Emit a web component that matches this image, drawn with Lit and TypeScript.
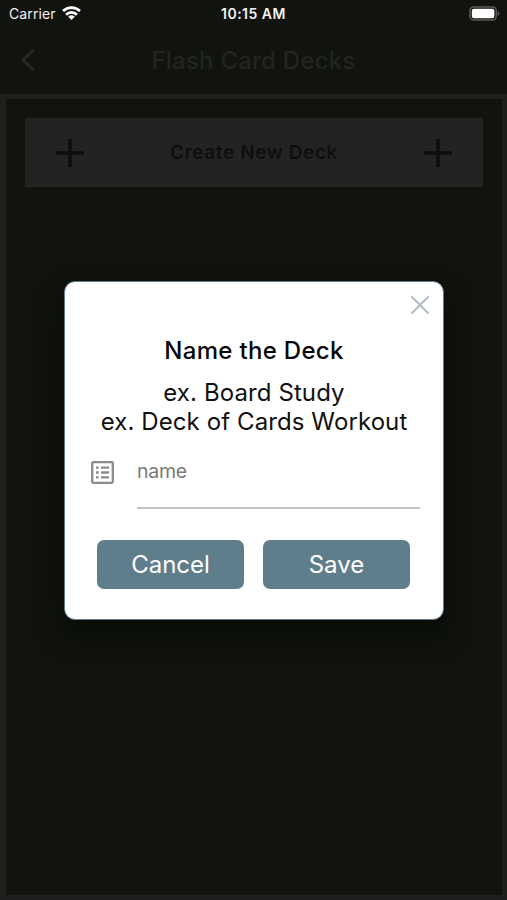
import { LitElement, html, css } from "lit";
import { customElement } from "lit/decorators.js";

const plus = html`<svg class="plus" width="28" height="28" viewBox="0 0 28 28">
  <path d="M14 0v28M0 14h28" stroke="#0e0f0d" stroke-width="3.6" />
</svg>`;

@customElement("status-bar")
class StatusBar extends LitElement {
  static styles = css`
    :host { display: grid; grid-template-columns: 1fr auto 1fr; align-items: center; height: 27px; box-sizing: border-box; padding: 0 7px 0 9px; color: #f2f2f2; }
    .left { display: flex; align-items: center; gap: 6px; font-size: 14px; letter-spacing: 0.1px; }
    .time { margin-left: -2px; font-size: 14px; font-weight: 600; letter-spacing: 0.5px; }
    .right { display: flex; justify-content: flex-end; }
    svg { display: block; }
    .left svg { margin-top: -1px; }
  `;
  render() {
    return html`
      <div class="left">
        <span>Carrier</span>
        <svg width="19" height="14" viewBox="0 0 19 14" fill="none" stroke="#fff" stroke-width="2.7">
          <path d="M1 5.1a12.3 12.3 0 0 1 17 0" />
          <path d="M4.1 8.7a7.6 7.6 0 0 1 10.8 0" />
          <path d="M9.5 14L6.2 10.7a4.6 4.6 0 0 1 6.6 0z" fill="#fff" stroke="none" />
        </svg>
      </div>
      <div class="time">10:15 AM</div>
      <div class="right">
        <svg width="31" height="15" viewBox="0 0 31 15">
          <rect x="0.9" y="0.9" width="26.4" height="13.2" rx="4" fill="none" stroke="#5b5c5a" stroke-width="1.5" />
          <rect x="2.8" y="2.8" width="22.6" height="9.4" rx="2.2" fill="#fff" />
          <path d="M28.7 5.2c2.2.8 2.2 3.8 0 4.6z" fill="#5b5c5a" />
        </svg>
      </div>
    `;
  }
}

@customElement("name-dialog")
class NameDialog extends LitElement {
  static styles = css`
    :host { display: flex; flex-direction: column; box-sizing: border-box; width: 380px; height: 339px; border: 1px solid #607d8b; border-radius: 11px; background: #fff; color: #111; box-shadow: 0 14px 24px 6px rgba(0, 8, 2, 0.5); }
    .top { display: flex; justify-content: flex-end; padding: 13px 13px 0 0; height: 19px; }
    .title { margin-top: 22px; text-align: center; font-size: 24px; line-height: 30px; font-weight: 500; letter-spacing: 0.3px; color: #080808; }
    .hint { margin-top: 12px; text-align: center; font-size: 24px; line-height: 29px; letter-spacing: 0.1px; white-space: nowrap; }
    .field { display: flex; margin: 21px 23px 0 26px; }
    .field svg { margin-top: 4px; }
    .input { flex: 1; height: 52px; margin-left: 23px; box-sizing: border-box; border-bottom: 2px solid #c3c3c3; font-size: 19.5px; line-height: 28px; color: #7a7a7a; letter-spacing: -0.25px; }
    .actions { display: flex; gap: 19px; margin: 31px 33px 0 32px; }
    .btn { flex: 1; height: 49px; border-radius: 7px; background: #607d8b; color: #fff; font-size: 24px; line-height: 49px; text-align: center; letter-spacing: 0; }
    svg { display: block; flex: none; }
  `;
  render() {
    return html`
      <div class="top">
        <svg width="20" height="20" viewBox="0 0 20 20"><path d="M2 2l16 16M18 2L2 18" stroke="#b4bfca" stroke-width="2.2" stroke-linecap="round" /></svg>
      </div>
      <div class="title"><span>Name the Deck</span></div>
      <div class="hint"><span>ex. Board Study</span><br /><span>ex. Deck of Cards Workout</span></div>
      <div class="field">
        <svg width="23" height="23" viewBox="0 0 23 23">
          <rect x="1.2" y="1.2" width="20.6" height="20.6" rx="1" fill="none" stroke="#8b8b8b" stroke-width="2.3" />
          <path d="M5 6.6h2.6M5 11.5h2.6M5 16.4h2.6M10 6.6h8M10 11.5h8M10 16.4h8" stroke="#8b8b8b" stroke-width="2.3" />
        </svg>
        <div class="input">name</div>
      </div>
      <div class="actions">
        <div class="btn">Cancel</div>
        <div class="btn">Save</div>
      </div>
    `;
  }
}

@customElement("app-root")
class AppRoot extends LitElement {
  static styles = css`
    :host { position: relative; display: flex; flex-direction: column; width: 507px; height: 900px; overflow: hidden; background: #11130e; font-family: Inter, "Liberation Sans", sans-serif; }
    .header { display: grid; grid-template-columns: 60px 1fr 60px; align-items: center; height: 67px; }
    .header svg { margin: -2px 0 0 20px; display: block; }
    .title { text-align: center; font-size: 24px; font-weight: 500; letter-spacing: 0.22px; color: #222422; white-space: nowrap; }
    .frame { flex: 1; box-sizing: border-box; border: solid #1e201e; border-width: 5px 5px 5px 6px; padding: 19px; background: #11130e; }
    .card { display: flex; align-items: center; justify-content: space-between; height: 69px; box-sizing: border-box; padding: 0 31px 0 31px; background: #232323; color: #0e0f0d; font-size: 19px; font-weight: 600; letter-spacing: 0.6px; }
    .plus { display: block; }
    .overlay { position: absolute; inset: 0; display: flex; align-items: center; justify-content: center; padding: 1px 0 0 1px; }
  `;
  render() {
    return html`
      <status-bar></status-bar>
      <div class="header">
        <svg width="16" height="24" viewBox="0 0 16 24"><path d="M14 1.5L3 12l11 10.5" fill="none" stroke="#272826" stroke-width="3" /></svg>
        <div class="title">Flash Card Decks</div>
      </div>
      <div class="frame">
        <div class="card">${plus}<span>Create New Deck</span>${plus}</div>
      </div>
      <div class="overlay"><name-dialog></name-dialog></div>
    `;
  }
}
